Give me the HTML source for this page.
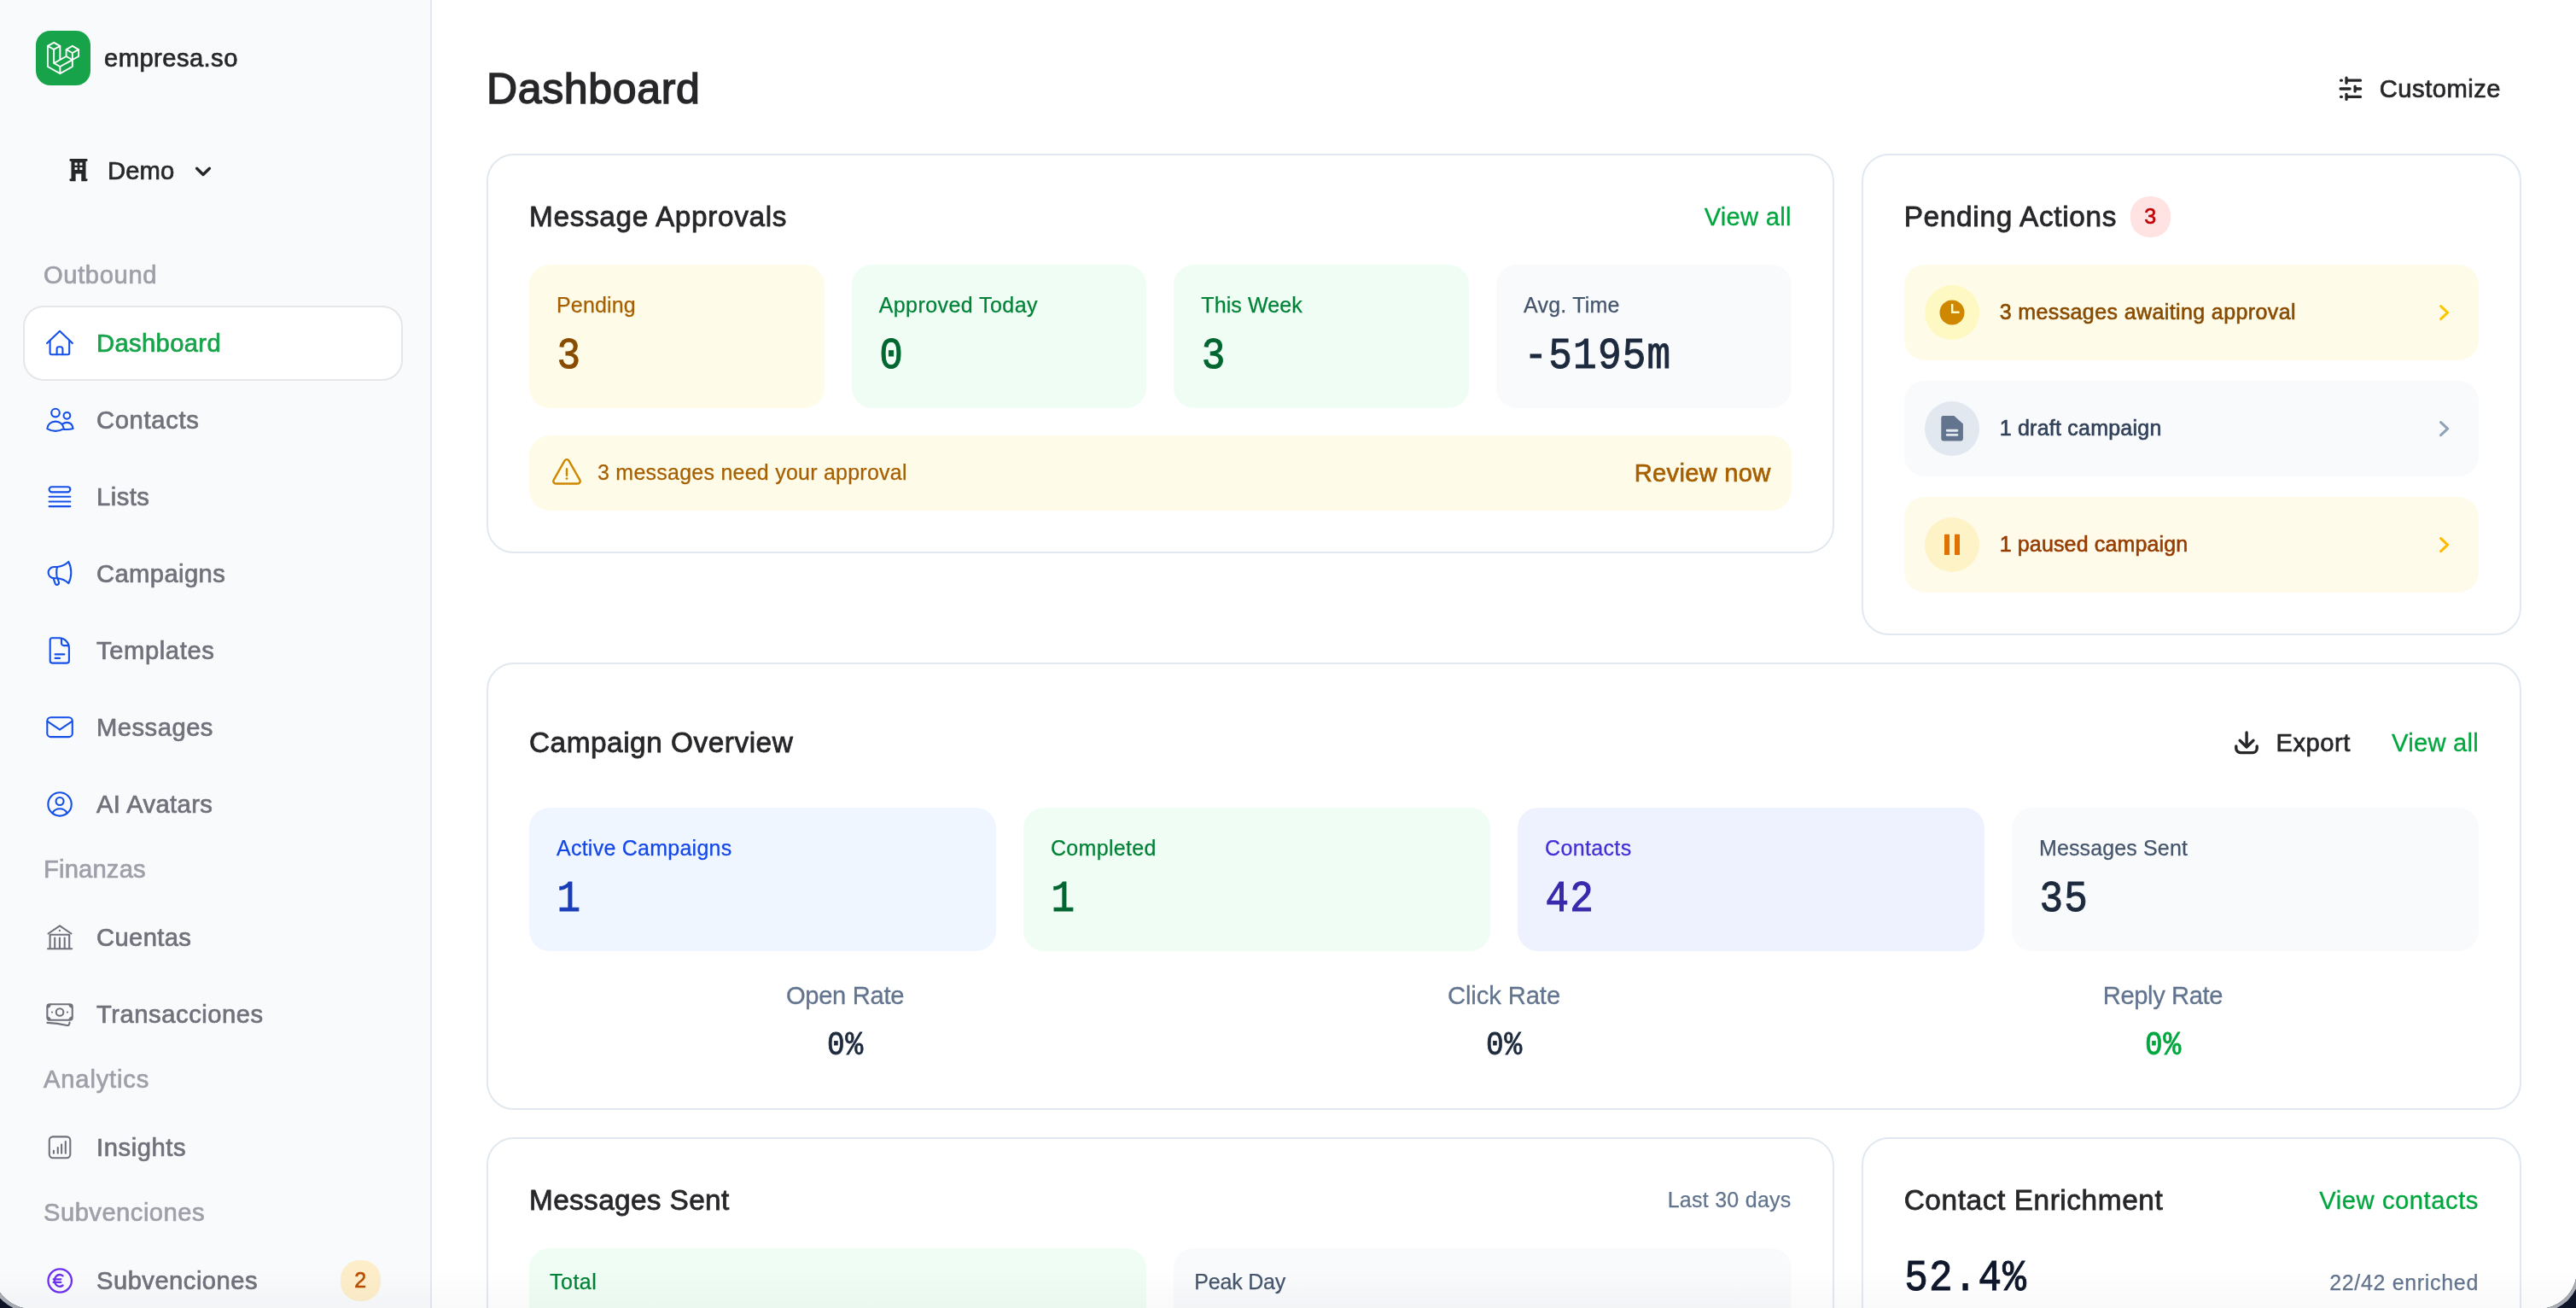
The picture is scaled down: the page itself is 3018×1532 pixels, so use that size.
<!DOCTYPE html>
<html lang="en"><head>
<meta charset="utf-8">
<title>Dashboard - empresa.so</title>
<style>
*{box-sizing:border-box;margin:0;padding:0}
html,body{width:3018px;height:1532px;overflow:hidden;background:#10172a}
body{font-family:"Liberation Sans",sans-serif;color:#27272a;-webkit-font-smoothing:antialiased}
a{color:inherit;text-decoration:none}
ul{list-style:none}
button{font:inherit;color:inherit;background:none;border:0}
svg{display:block;overflow:visible}
#app{will-change:transform;position:relative;width:3018px;height:1532px;background:#fff;overflow:hidden}
.winframe{position:absolute;left:-8.5px;right:-1.3px;top:-200px;bottom:-1.3px;border-radius:45px;box-shadow:0 0 0 4px #aaacb4,0 0 0 80px #0e1428;pointer-events:none}
.t{white-space:nowrap;display:inline-block;position:relative;top:-0.5px}
/* text sizes */
.f24r,.f24m{font-size:25px;line-height:32px;top:-1px}
.f28r,.f28m{font-size:29.2px;line-height:40px}
.f32m{font-size:33.4px;line-height:48px}
.f48m{font-size:50px;line-height:64px}
.f24m,.f28m,.f32m{-webkit-text-stroke:0.024em currentColor}
.f48m{-webkit-text-stroke:0.03em currentColor}
.f24r,.f28r{-webkit-text-stroke:0.01em currentColor}
.n{font-family:"Liberation Mono",monospace;display:inline-block;white-space:nowrap;-webkit-text-stroke:0.02em currentColor}
.n48{font-size:46px;letter-spacing:1.2px;line-height:64px;transform-origin:0 44px;transform:translate(0.5px,5px) scaleY(1.14)}
.n36{font-size:34.5px;letter-spacing:0.9px;line-height:56px;transform-origin:50% 37.5px;transform:translate(0.5px,4px) scaleY(1.12)}

/* ---------- sidebar ---------- */
.sidebar{position:absolute;left:0;top:0;width:506px;height:1532px;background:#f9fafc;border-right:2px solid #e2e8f0}
.brand{position:absolute;left:42px;top:36px;height:64px;display:flex;align-items:center}
.logo{width:64px;height:64px;border-radius:17px;background:#16a34a;display:flex;align-items:center;justify-content:center}
.brand .t{margin-left:16px;color:#27272a}
.team{position:absolute;left:81px;top:180px;height:40px;display:flex;align-items:center;color:#27272a}
.team .ico{width:22px;height:27.100px}
.team .t{margin-left:23px}
.team .chev{margin-left:24px;width:20px;height:12px;margin-top:2px}
.nav{position:absolute;left:27px;top:302px;width:445px}
.nav h3{height:40px;margin:12px 0 16px 24px;font-weight:normal;color:#9f9fa9}
.nav h3:first-child{margin-top:0}
.nav li:first-child{margin-top:0}
.nav li{position:relative;height:88px;margin-top:2px;border-radius:24px;border:2px solid transparent;display:flex;align-items:center;padding-left:21px;color:#71717b}
.nav li.active{background:#fff;border-color:#e6e6e9;color:#16a34a}
.nav li svg{width:40px;height:40px;color:#1450e8;flex:none;fill:none;stroke:currentColor;stroke-width:2.1;stroke-linecap:round;stroke-linejoin:round}
.nav li.gray svg{color:#71717b}
.nav li.violet svg{color:#6c30f0;stroke-width:2.3}
.nav li>.t{margin-left:23px}
.badge{position:absolute;right:24px;top:18px;height:48px;padding:0 16px;border-radius:22px;background:#fdedc9;color:#bb4d00;display:flex;align-items:center;justify-content:center}

/* ---------- main ---------- */
.main{position:absolute;left:506px;top:0;width:2512px;height:1532px;padding:0 64px}
.pagehead{position:relative;height:180px}
.pagehead h1{position:absolute;left:0;top:72px;font-weight:normal;color:#27272a}
.btn{display:flex;align-items:center;height:72px;padding:0 24px;color:#27272a}
.btn svg{width:36px;height:36px;margin-right:16px}
.pagehead .btn{position:absolute;right:0;top:68px}
.grid{display:grid;grid-template-columns:repeat(3,1fr);gap:32px;align-items:start}
.card{background:#fff;border:2px solid #e2e8f0;border-radius:32px;padding:48px}
.span2{grid-column:span 2}
.span3{grid-column:span 3}
.chead{display:flex;align-items:center;justify-content:space-between;height:48px;margin-bottom:32px}
.chead.tall{height:88px}
.chead h2{font-weight:normal;color:#27272a;display:flex;align-items:center}
.link{color:#00a63e}
.muted{color:#62748e}
.pill{margin-left:16px;height:48px;padding:0 16px;border-radius:22px;background:#ffe2e2;color:#c10007;display:flex;align-items:center}
.stats{display:grid;gap:32px}
.c4{grid-template-columns:repeat(4,1fr)}
.c3{grid-template-columns:repeat(3,1fr)}
.c2{grid-template-columns:repeat(2,1fr)}
.stat{height:168px;border-radius:24px;padding:32px}
.stat .t{display:block;height:32px}
.stat .n{margin-top:8px}
.stat.sm{padding:24px}
.yellow{background:#fefce8;color:#a65f00}.yellow .n{color:#894b00}
.green{background:#f0fdf4;color:#008236}.green .n{color:#016630}
.slate{background:#f8fafc;color:#45556c}.slate .n{color:#1d293d}
.blue{background:#eff6ff;color:#1447e6}.blue .n{color:#193cb8}
.indigo{background:#eef2ff;color:#432dd7}.indigo .n{color:#372aac}
.amber{background:#fffbeb;color:#973c00}
.alert{margin-top:32px;height:88px;border-radius:24px;padding:0 24px;display:flex;align-items:center}
.alert svg{width:40px;height:40px;color:#d08700;margin-right:16px}
.alert .go{margin-left:auto}
.actions li{height:112px;border-radius:24px;padding:0 24px;display:flex;align-items:center;margin-bottom:24px}
.actions li:last-child{margin-bottom:0}
.actions li.yellow{color:#894b00}
.actions li.slate{color:#314158}
.circ{width:64px;height:64px;border-radius:50%;display:flex;align-items:center;justify-content:center;margin-right:24px;flex:none}
.circ svg{width:32px;height:32px}
.actions .arrow{margin-left:auto;width:32px;height:32px}
.rates{display:grid;grid-template-columns:repeat(3,1fr);gap:32px;margin-top:32px;text-align:center}
.rates .t{display:block;height:40px;color:#62748e}
.rates .n{margin-top:8px;color:#1d293d}
.rates .n.g{color:#00a63e}
.enrich{display:flex;align-items:flex-start;justify-content:space-between;height:64px}
.enrich .n{color:#0f172b}
.enrich .muted{margin-top:25px}
.fade{position:absolute;left:0;right:0;bottom:0;height:46px;background:linear-gradient(to bottom,rgba(15,23,42,0),rgba(15,23,42,0.024));pointer-events:none}
</style>
</head>
<body>
<div id="app">
<aside class="sidebar">
  <div class="brand">
    <div class="logo">
      <svg width="40" height="40" viewBox="0 0 40 42" fill="#fff"><path fill-rule="evenodd" clip-rule="evenodd" d="M17.2 5.633 8.6.855 0 5.633v26.51l16.2 9 16.2-9v-8.442l7.6-4.223V9.856l-8.6-4.777-8.6 4.777V18.3l-5.6 3.111V5.633ZM38 18.301l-5.6 3.11v-6.157l5.6-3.11V18.3Zm-1.06-7.856-5.54 3.078-5.54-3.079 5.54-3.078 5.54 3.079ZM24.8 18.3v-6.157l5.6 3.111v6.158L24.8 18.3Zm-1 1.732 5.54 3.078-13.14 7.302-5.54-3.078 13.14-7.3v-.002Zm-16.2 7.89 7.6 4.222V38.3L2 30.966V7.92l5.6 3.111v16.892ZM8.6 9.3 3.06 6.222 8.6 3.143l5.54 3.08L8.6 9.3Zm21.8 15.51-13.2 7.334V38.3l13.2-7.334v-6.156ZM9.6 11.034l5.6-3.11v14.6l-5.6 3.11v-14.6Z"></path></svg>
    </div>
    <span class="t f28m" style="letter-spacing: 0.43px;">empresa.so</span>
  </div>
  <div class="team">
    <svg class="ico" viewBox="0 0 22 28" fill="currentColor"><path fill-rule="evenodd" d="M1.500 0h19a1.500 1.500 0 0 1 0 3H19.800v21.100H20.500a1.500 1.500 0 0 1 0 3H14.400v-9H7.500v9H1.500a1.500 1.500 0 0 1 0-3H2.200V3H1.500a1.500 1.500 0 0 1 0-3zM6.400 4.700h3.200v3.200H6.400zM12.400 4.700h3.200v3.200h-3.200zM6.400 10.300h3.200v3.200H6.400zM12.400 10.300h3.200v3.200h-3.200z"></path></svg>
    <span class="t f28m" style="letter-spacing: 0.14px;">Demo</span>
    <svg class="chev" viewBox="0 0 20 12" fill="none" stroke="currentColor" stroke-width="3.400" stroke-linecap="round" stroke-linejoin="round"><path d="M2.600 2.200 10 9.500l7.400-7.300"></path></svg>
  </div>
  <nav class="nav">
    <h3><span class="t f28m" style="letter-spacing: 0.61px;">Outbound</span></h3>
    <ul>
      <li class="active"><svg viewBox="0 0 40 40"><path d="M5.100 20.100 20 5.800l14.900 14.300"></path><path d="M8.600 17V31.600a1.700 1.700 0 0 0 1.700 1.700H29.500a1.700 1.700 0 0 0 1.700-1.700V17"></path><path d="M16.600 33.200V26.600a2.400 2.400 0 0 1 2.400-2.400h2a2.400 2.400 0 0 1 2.400 2.400v6.600"></path></svg><span class="t f28m" style="letter-spacing: 0.36px;">Dashboard</span></li>
      <li><svg viewBox="0 0 40 40"><circle cx="15" cy="11.600" r="4.800"></circle><circle cx="28.400" cy="14.800" r="3.850"></circle><path d="M5.300 30.200C5.600 25.300 9.700 21.600 15 21.600s9.300 3.700 9.700 8.600C21.500 32.100 18.500 32.900 15 32.900S8.200 32 5.300 30.200z"></path><path d="M23 24.700c1.500-1.200 3.300-1.800 5.400-1.800 3.800 0 6.600 2.800 7.200 7.100-2.700.800-6.500 1.200-10.800.9"></path></svg><span class="t f28m" style="letter-spacing: 0.65px;">Contacts</span></li>
      <li><svg viewBox="0 0 40 40"><rect x="7.600" y="8.300" width="24.700" height="6.100" rx="3.050"></rect><path d="M7.600 19.800h24.700M7.600 25.500h24.700M7.600 31.100h24.700"></path></svg><span class="t f28m" style="letter-spacing: 0.47px;">Lists</span></li>
      <li><svg viewBox="0 0 40 40"><path d="M17 12c6-.7 10.500-3 13.300-6.100 1.900 3.600 3 8.100 3 12.700s-1.100 9.100-3 12.600C27.500 28.200 23 25.900 17 25.200h-3.800c-3.700 0-6.600-2.900-6.600-6.600s2.900-6.600 6.600-6.600z"></path><path d="M17 12c-.6 2-.8 4.300-.8 6.600s.2 4.600.8 6.600"></path><path d="M12.600 25.400l2 5.900c.5 1.300 1.800 1.900 3 1.400s1.700-1.700 1.300-2.900l-1.300-4.200"></path></svg><span class="t f28m" style="letter-spacing: 0.39px;">Campaigns</span></li>
      <li><svg viewBox="0 0 40 40"><path d="M11.200 5.300h8.300c6.300 0 11.400 5.100 11.400 11.400v15.400a2.500 2.500 0 0 1-2.500 2.500H11.200a2.500 2.500 0 0 1-2.500-2.500V7.800a2.500 2.500 0 0 1 2.500-2.500z"></path><path d="M22 6v5.400a2.700 2.700 0 0 0 2.700 2.700h5.500"></path><path d="M14.600 24.400h10.800M14.600 28.900h5.400"></path></svg><span class="t f28m" style="letter-spacing: 0.6px;">Templates</span></li>
      <li><svg viewBox="0 0 40 40"><rect x="5.300" y="8.300" width="29.500" height="22.800" rx="4.200"></rect><path d="M5.600 12.800 20 22.700l14.400-9.900"></path></svg><span class="t f28m" style="letter-spacing: 0.49px;">Messages</span></li>
      <li><svg viewBox="0 0 40 40"><circle cx="20.050" cy="19.900" r="13.700"></circle><circle cx="20.050" cy="16.500" r="4.500"></circle><path d="M11.400 30.300c1.700-3 5-5 8.650-5s6.950 2 8.650 5"></path></svg><span class="t f28m" style="letter-spacing: 0.37px;">AI Avatars</span></li>
    </ul>
    <h3><span class="t f28m" style="letter-spacing: 0.17px;">Finanzas</span></h3>
    <ul>
      <li class="gray"><svg viewBox="0 0 40 40"><path d="M6.500 15.500 20 6.400l13.500 9.100"></path><path d="M8.600 33V16.800h22.600V33M14.200 20.600V33M19.900 20.600V33M25.700 20.600V33"></path><path d="M6 33.300h28.200"></path><circle cx="19.900" cy="12" r="1.150" fill="currentColor" stroke="none"></circle></svg><span class="t f28m" style="letter-spacing: 0.37px;">Cuentas</span></li>
      <li class="gray"><svg viewBox="0 0 40 40"><rect x="5.350" y="8.250" width="29.400" height="18.550" rx="3"></rect><path fill="currentColor" stroke="none" d="M5.400 8.300h4.400a4.400 4.400 0 0 1-4.400 4.400zM34.700 8.300v4.400a4.400 4.400 0 0 1-4.400-4.400zM34.700 26.800h-4.400a4.400 4.400 0 0 1 4.400-4.400zM5.400 26.800v-4.400a4.400 4.400 0 0 1 4.400 4.400z"></path><circle cx="20.050" cy="17.500" r="4.300"></circle><circle cx="11" cy="17.600" r="1.150" fill="currentColor" stroke="none"></circle><circle cx="29" cy="17.600" r="1.150" fill="currentColor" stroke="none"></circle><path d="M5.400 29.900c7.700.2 15.600 1.200 23.100 3 1.500.4 2.700-.4 2.800-1.900l.2-1.400"></path></svg><span class="t f28m" style="letter-spacing: 0.54px;">Transacciones</span></li>
    </ul>
    <h3><span class="t f28m" style="letter-spacing: 0.82px;">Analytics</span></h3>
    <ul>
      <li class="gray"><svg viewBox="0 0 40 40"><rect x="7.800" y="7.350" width="24.500" height="24.950" rx="4.200"></rect><path d="M12.900 23.700v3.100M17.750 20.100v6.700M22.100 16.500v10.300M26.800 13v13.800"></path></svg><span class="t f28m" style="letter-spacing: 0.57px;">Insights</span></li>
    </ul>
    <h3><span class="t f28m" style="letter-spacing: 0.47px;">Subvenciones</span></h3>
    <ul>
      <li class="violet"><svg viewBox="0 0 40 40"><circle cx="20.200" cy="20" r="13.700"></circle><path d="M23.600 14.300c-1-.8-2.300-1.300-3.700-1.300-3.400 0-6 3-6 6.900s2.600 6.900 6 6.900c1.400 0 2.700-.5 3.700-1.300"></path><path d="M12.700 18.300h8.600M12.700 21.900h8.600"></path></svg><span class="t f28m" style="letter-spacing: 0.47px;">Subvenciones</span><span class="badge"><span class="t f24m" style="letter-spacing: 0.89px;">2</span></span></li>
    </ul>
  </nav>
</aside>
<main class="main">
  <header class="pagehead">
    <h1><span class="t f48m" style="letter-spacing: 0.64px;">Dashboard</span></h1>
    <button class="btn"><svg viewBox="0 0 36 36" fill="none" stroke="currentColor" stroke-width="3.300" stroke-linecap="round"><path d="M6.600 8.200h.8M13 8.200h16.500M13 5.200v6.100M6.100 18h11M23.100 18h6.500M23.100 15.100v6M6.600 27.450h.8M13 27.450h16.500M13 24.300v6.100"></path></svg><span class="t f28m" style="letter-spacing: 0.48px;">Customize</span></button>
  </header>
  <div class="grid">
    <section class="card span2">
      <div class="chead"><h2><span class="t f32m" style="letter-spacing: 0.63px;">Message Approvals</span></h2><a class="link"><span class="t f28r" style="letter-spacing: 0.24px;">View all</span></a></div>
      <div class="stats c4">
        <div class="stat yellow"><span class="t f24r" style="letter-spacing: 0.15px;">Pending</span><span class="n n48">3</span></div>
        <div class="stat green"><span class="t f24r" style="letter-spacing: 0.43px;">Approved Today</span><span class="n n48">0</span></div>
        <div class="stat green"><span class="t f24r" style="letter-spacing: 0.1px;">This Week</span><span class="n n48">3</span></div>
        <div class="stat slate"><span class="t f24r" style="letter-spacing: 0.22px;">Avg. Time</span><span class="n n48">-5195m</span></div>
      </div>
      <div class="alert yellow">
        <svg viewBox="0 0 40 40" fill="none" stroke="currentColor" stroke-width="2.400" stroke-linecap="round" stroke-linejoin="round"><path d="M17.500 5.600 4.700 28.200c-1.100 1.900.3 4.300 2.500 4.300h25.600c2.200 0 3.600-2.400 2.500-4.300L22.500 5.600c-1.100-2-3.900-2-5 0z"></path><path d="M20 15.300v7.400"></path><circle cx="20" cy="26.600" r="1.400" fill="currentColor" stroke="none"></circle></svg>
        <span class="t f24r" style="letter-spacing: 0.24px;">3 messages need your approval</span>
        <a class="go"><span class="t f28m" style="letter-spacing: 0.26px;">Review now</span></a>
      </div>
    </section>
    <section class="card">
      <div class="chead"><h2><span class="t f32m" style="letter-spacing: 0.67px;">Pending Actions</span><span class="pill"><span class="t f24m" style="letter-spacing: 1.14px;">3</span></span></h2></div>
      <ul class="actions">
        <li class="yellow"><span class="circ" style="background:#fef9c2"><svg viewBox="0 0 32 32"><circle cx="16" cy="16" r="14.500" fill="#d08700"></circle><path d="M16.200 7.200V15.800H23.400" fill="none" stroke="#fef9c2" stroke-width="2.400" stroke-linecap="square" stroke-linejoin="miter"></path></svg></span><span class="t f24m" style="letter-spacing: 0.39px;">3 messages awaiting approval</span><svg class="arrow" viewBox="0 0 32 32" fill="none" stroke="#fdc700" stroke-width="3" stroke-linecap="round" stroke-linejoin="round"><path d="M11.600 8.600l8 7.550-8 7.550"></path></svg></li>
        <li class="slate"><span class="circ" style="background:#e2e8f0"><svg viewBox="0 0 32 32"><path d="M5.700 1.100h12.700L28.900 10.600V28a2.400 2.400 0 0 1-2.400 2.400H5.700A2.400 2.400 0 0 1 3.300 28V3.500a2.400 2.400 0 0 1 2.400-2.400z" fill="#62748e"></path><path d="M10.200 18.200h11.700M10.200 23.400h11.700" stroke="#e2e8f0" stroke-width="2.900" stroke-linecap="round"></path></svg></span><span class="t f24m" style="letter-spacing: 0.23px;">1 draft campaign</span><svg class="arrow" viewBox="0 0 32 32" fill="none" stroke="#90a1b9" stroke-width="3" stroke-linecap="round" stroke-linejoin="round"><path d="M11.600 8.600l8 7.550-8 7.550"></path></svg></li>
        <li class="amber"><span class="circ" style="background:#fef3c6"><svg viewBox="0 0 32 32" fill="#e17100"><rect x="7" y="3.800" width="6" height="24.200" rx=".6"></rect><rect x="19" y="3.800" width="6" height="24.200" rx=".6"></rect></svg></span><span class="t f24m" style="letter-spacing: 0.15px;">1 paused campaign</span><svg class="arrow" viewBox="0 0 32 32" fill="none" stroke="#ffb900" stroke-width="3" stroke-linecap="round" stroke-linejoin="round"><path d="M11.600 8.600l8 7.550-8 7.550"></path></svg></li>
      </ul>
    </section>
    <section class="card span3">
      <div class="chead tall"><h2><span class="t f32m" style="letter-spacing: 0.51px;">Campaign Overview</span></h2>
        <div style="display:flex;align-items:center"><button class="btn" style="height:88px;margin-right:24px"><svg viewBox="0 0 36 36" fill="none" stroke="currentColor" stroke-width="3.400" stroke-linecap="round" stroke-linejoin="round"><path d="M18.100 6v16.500M10.200 15.300l7.900 7.700 7.900-7.700"></path><path d="M5.800 22v2.400a5.200 5.200 0 0 0 5.200 5.200h14a5.200 5.200 0 0 0 5.200-5.200V22"></path></svg><span class="t f28m" style="letter-spacing: 0.53px;">Export</span></button><a class="link"><span class="t f28r" style="letter-spacing: 0.24px;">View all</span></a></div>
      </div>
      <div class="stats c4">
        <div class="stat blue"><span class="t f24r" style="letter-spacing: 0.25px;">Active Campaigns</span><span class="n n48">1</span></div>
        <div class="stat green"><span class="t f24r" style="letter-spacing: 0.32px;">Completed</span><span class="n n48">1</span></div>
        <div class="stat indigo"><span class="t f24r" style="letter-spacing: 0.36px;">Contacts</span><span class="n n48">42</span></div>
        <div class="stat slate"><span class="t f24r" style="letter-spacing: 0.13px;">Messages Sent</span><span class="n n48">35</span></div>
      </div>
      <div class="rates">
        <div><span class="t f28r" style="letter-spacing: -0.34px;">Open Rate</span><span class="n n36">0%</span></div>
        <div><span class="t f28r" style="letter-spacing: -0.09px;">Click Rate</span><span class="n n36">0%</span></div>
        <div><span class="t f28r" style="letter-spacing: -0.4px;">Reply Rate</span><span class="n n36 g">0%</span></div>
      </div>
    </section>
    <section class="card span2">
      <div class="chead"><h2><span class="t f32m" style="letter-spacing: 0.34px;">Messages Sent</span></h2><span class="muted"><span class="t f24r" style="letter-spacing: 0.27px;">Last 30 days</span></span></div>
      <div class="stats c2">
        <div class="stat sm green"><span class="t f24r" style="letter-spacing: 0.49px;">Total</span></div>
        <div class="stat sm slate"><span class="t f24r" style="letter-spacing: -0.2px;">Peak Day</span></div>
      </div>
    </section>
    <section class="card">
      <div class="chead"><h2><span class="t f32m" style="letter-spacing: 0.58px;">Contact Enrichment</span></h2><a class="link"><span class="t f28r" style="letter-spacing: 0.55px;">View contacts</span></a></div>
      <div class="enrich"><span class="n n48">52.4%</span><span class="muted"><span class="t f24r" style="letter-spacing: 0.67px;">22/42 enriched</span></span></div>
    </section>
  </div>
</main>
<div class="fade"></div>
<div class="winframe"></div>
</div>


</body></html>
